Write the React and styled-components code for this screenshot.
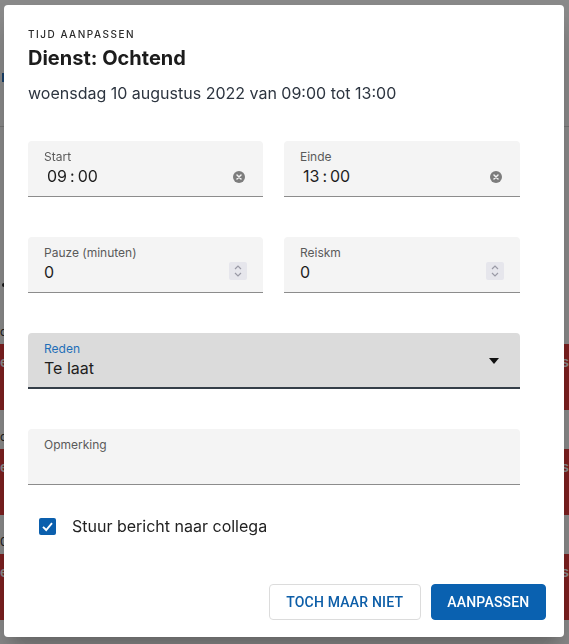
import React from "react";
import styled, { createGlobalStyle } from "styled-components";

const Global = createGlobalStyle`
  html, body { margin: 0; padding: 0; }
  body {
    font-family: Inter, "Noto Sans", Arial, sans-serif;
    background: #fff;
    color: #222;
    overflow: hidden;
  }
  * { box-sizing: border-box; }
`;

/* ---------- background page (behind the modal) ---------- */
const Page = styled.div`
  width: 569px;
  height: 644px;
  display: flex;
  flex-direction: column;
`;

const PageHeader = styled.div`
  height: 127px;
  border-bottom: 1px solid #d6d6d6;
  padding: 73px 0 0 2px;
`;

const TabMark = styled.div`
  width: 3px;
  height: 9px;
  background: #2f78c4;
`;

const Dot = styled.div`
  width: 4px;
  height: 4px;
  border-radius: 50%;
  background: #222;
  margin: 156px 0 0 2px;
`;

const Group = styled.div`
  display: flex;
  flex-direction: column;
  margin-top: ${(p) => p.$top}px;
`;

const Caption = styled.div`
  height: 14px;
  font-size: 12px;
  line-height: 14px;
  color: #333;
`;

const ShiftRow = styled.div`
  height: 66px;
  margin-top: 5px;
  background: #e63a3a;
  color: #fff;
  display: flex;
  justify-content: space-between;
  padding: 8px 0 0 0;
  font-size: 14px;
  font-weight: 600;
  line-height: 20px;
`;

/* ---------- modal ---------- */
const Backdrop = styled.div`
  position: fixed;
  inset: 0;
  background: rgba(0, 0, 0, 0.46);
  display: flex;
  align-items: flex-start;
  padding: 5px 0 0 4px;
`;

const Dialog = styled.div`
  width: 560px;
  height: 632px;
  background: #fff;
  border-radius: 4px;
  box-shadow: 0 11px 15px -7px rgba(0, 0, 0, 0.2), 0 24px 38px 3px rgba(0, 0, 0, 0.14);
  display: flex;
  flex-direction: column;
  padding: 23px 18px 17px 24px;
`;

const Overline = styled.div`
  font-size: 10px;
  line-height: 12px;
  letter-spacing: 1.5px;
  text-transform: uppercase;
  color: #2a2a2a;
  font-weight: 500;
`;

const Title = styled.h2`
  margin: 4px 0 0;
  font-size: 20px;
  line-height: 28px;
  font-weight: 700;
  color: #1c1c1c;
`;

const Subtitle = styled.p`
  margin: 9px 0 0;
  font-size: 16px;
  line-height: 24px;
  color: #2d3540;
`;

const Form = styled.div`
  margin-top: 36px;
  width: 492px;
  display: grid;
  grid-template-columns: 235px 236px;
  column-gap: 21px;
  row-gap: 40px;
`;

const Field = styled.div`
  grid-column: ${(p) => (p.$wide ? "1 / -1" : "auto")};
  height: 56px;
  border-radius: 4px 4px 0 0;
  background: ${(p) => (p.$focused ? "#dbdbdb" : "#f4f4f4")};
  border-bottom: ${(p) => (p.$focused ? "2px solid #343e48" : "1px solid #8c8c8c")};
  padding: 8px 16px 0 16px;
  display: flex;
  align-items: flex-start;
`;

const FieldBody = styled.div`
  flex: 1;
  display: flex;
  flex-direction: column;
`;

const Label = styled.label`
  font-size: 12px;
  line-height: 16px;
  color: ${(p) => (p.$focused ? "#1f6fb8" : "#5a5a5a")};
`;

const Value = styled.div`
  font-size: 16px;
  line-height: 23px;
  color: #1e1e1e;
  display: flex;
  align-items: center;
  gap: ${(p) => (p.$time ? "3px" : "0")};
  padding-left: ${(p) => (p.$time ? "3px" : "0")};
`;

const Adornment = styled.div`
  align-self: flex-start;
  margin-top: ${(p) => p.$top}px;
  margin-right: ${(p) => p.$right}px;
  display: flex;
`;

const Spinner = styled.div`
  width: 18px;
  height: 18px;
  border-radius: 2px;
  background: #e6e6ec;
  display: flex;
  align-items: center;
  justify-content: center;
`;

const CheckRow = styled.div`
  margin-top: 29px;
  padding-left: 11px;
  display: flex;
  align-items: center;
  gap: 16px;
`;

const Box = styled.span`
  width: 17px;
  height: 17px;
  border-radius: 2px;
  background: #0b5fad;
  display: flex;
  align-items: center;
  justify-content: center;
`;

const CheckLabel = styled.span`
  font-size: 16px;
  line-height: 24px;
  color: #222;
`;

const Actions = styled.div`
  margin-top: auto;
  display: flex;
  justify-content: flex-end;
  gap: 10px;
`;

const Button = styled.button`
  height: 36px;
  padding: 0 ${(p) => (p.$primary ? "15.5px" : "16.5px")};
  border-radius: 4px;
  font-family: Roboto, "Liberation Sans", Arial, sans-serif;
  font-size: 14px;
  font-weight: 500;
  letter-spacing: 0.2px;
  text-transform: uppercase;
  cursor: pointer;
  background: ${(p) => (p.$primary ? "#0a61b0" : "#fff")};
  color: ${(p) => (p.$primary ? "#fff" : "#0d5ea8")};
  border: 1px solid ${(p) => (p.$primary ? "#0a61b0" : "#dcdcdc")};
`;

const ClearIcon = () => (
  <svg width="12" height="12" viewBox="0 0 12 12">
    <circle cx="6" cy="6" r="6" fill="#7d7d7d" />
    <path d="M4 4 L8 8 M8 4 L4 8" stroke="#f4f4f4" strokeWidth="1.5" strokeLinecap="round" />
  </svg>
);

const SpinIcon = () => (
  <svg width="10" height="14" viewBox="0 0 10 14">
    <path d="M2 5 L5 2 L8 5" stroke="#9a9aa6" strokeWidth="1.2" fill="none" />
    <path d="M2 9 L5 12 L8 9" stroke="#9a9aa6" strokeWidth="1.2" fill="none" />
  </svg>
);

const ArrowIcon = () => (
  <svg width="12" height="6" viewBox="0 0 12 6">
    <path d="M1 0 L11 0 L6 6 Z" fill="#111" />
  </svg>
);

const CheckIcon = () => (
  <svg width="13" height="13" viewBox="0 0 13 13">
    <path d="M2 6.8 L5.2 10 L11 3.2" stroke="#fff" strokeWidth="1.9" fill="none" />
  </svg>
);

const TimeValue = ({ h, m }) => (
  <Value $time>
    <span>{h}</span>
    <span>:</span>
    <span>{m}</span>
  </Value>
);

export default function App() {
  return (
    <>
      <Global />
      <Page>
        <PageHeader>
          <TabMark />
        </PageHeader>
        <Dot />
        <Group $top={38}>
          <Caption>c</Caption>
          <ShiftRow><span>e</span><span>s</span></ShiftRow>
        </Group>
        <Group $top={20}>
          <Caption>c</Caption>
          <ShiftRow><span>e</span><span>s</span></ShiftRow>
        </Group>
        <Group $top={20}>
          <Caption>0</Caption>
          <ShiftRow><span>e</span><span>s</span></ShiftRow>
        </Group>
      </Page>

      <Backdrop>
        <Dialog role="dialog">
          <Overline>Tijd aanpassen</Overline>
          <Title>Dienst: Ochtend</Title>
          <Subtitle>woensdag 10 augustus 2022 van 09:00 tot 13:00</Subtitle>

          <Form>
            <Field>
              <FieldBody>
                <Label>Start</Label>
                <TimeValue h="09" m="00" />
              </FieldBody>
              <Adornment $top={22} $right={2}><ClearIcon /></Adornment>
            </Field>
            <Field>
              <FieldBody>
                <Label>Einde</Label>
                <TimeValue h="13" m="00" />
              </FieldBody>
              <Adornment $top={22} $right={2}><ClearIcon /></Adornment>
            </Field>
            <Field>
              <FieldBody>
                <Label>Pauze (minuten)</Label>
                <Value>0</Value>
              </FieldBody>
              <Adornment $top={17} $right={0}><Spinner><SpinIcon /></Spinner></Adornment>
            </Field>
            <Field>
              <FieldBody>
                <Label>Reiskm</Label>
                <Value>0</Value>
              </FieldBody>
              <Adornment $top={17} $right={0}><Spinner><SpinIcon /></Spinner></Adornment>
            </Field>
            <Field $wide $focused>
              <FieldBody>
                <Label $focused>Reden</Label>
                <Value>Te laat</Value>
              </FieldBody>
              <Adornment $top={17} $right={4}><ArrowIcon /></Adornment>
            </Field>
            <Field $wide>
              <FieldBody>
                <Label>Opmerking</Label>
              </FieldBody>
            </Field>
          </Form>

          <CheckRow>
            <Box><CheckIcon /></Box>
            <CheckLabel>Stuur bericht naar collega</CheckLabel>
          </CheckRow>

          <Actions>
            <Button>Toch maar niet</Button>
            <Button $primary>Aanpassen</Button>
          </Actions>
        </Dialog>
      </Backdrop>
    </>
  );
}
